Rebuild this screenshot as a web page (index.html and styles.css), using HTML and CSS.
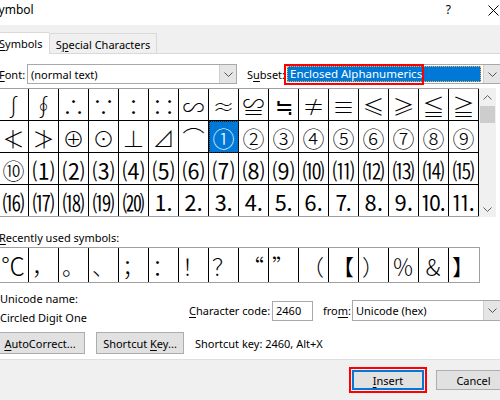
FILE: index.html
```html
<!DOCTYPE html>
<html>
<head>
<meta charset="utf-8">
<title>Symbol</title>
<link rel="stylesheet" href="styles.css">
</head>
<body>
<div class="dialog">
  <div class="titlebar">
    <span class="title">Symbol</span>
    <span class="help">?</span>
    <svg class="close" width="11" height="11" viewBox="0 0 11 11"><path d="M0.5 0.5L10.5 10.5M10.5 0.5L0.5 10.5" stroke="#000" stroke-width="1" fill="none"/></svg>
  </div>
  <div class="tabbar">
    <div class="tab active"><u>S</u>ymbols</div>
    <div class="tab">S<u>p</u>ecial Characters</div>
  </div>
  <div class="panel">
    <div class="font-row">
      <span class="lbl font-lbl"><u>F</u>ont:</span>
      <div class="combo font-combo">
        <span class="combo-text">(normal text)</span>
        <span class="drop"><svg width="9" height="5" viewBox="0 0 9 5"><path d="M0.5 0.5L4.5 4.5L8.5 0.5" stroke="#555" fill="none"/></svg></span>
      </div>
      <span class="lbl subset-lbl">S<u>u</u>bset:</span>
      <div class="combo subset-combo">
        <span class="sel-text">Enclosed Alphanumerics</span>
        <span class="drop"><svg width="9" height="5" viewBox="0 0 9 5"><path d="M0.5 0.5L4.5 4.5L8.5 0.5" stroke="#555" fill="none"/></svg></span>
        <span class="mark subset-mark"></span>
      </div>
    </div>

    <div class="grid-wrap">
      <div class="grid">
        <span class="cell">∫</span><span class="cell">∮</span><span class="cell">∴</span><span class="cell">∵</span><span class="cell">∶</span><span class="cell">∷</span><span class="cell">∽</span><span class="cell">≈</span><span class="cell">≌</span><span class="cell">≒</span><span class="cell">≠</span><span class="cell">≡</span><span class="cell">≤</span><span class="cell">≥</span><span class="cell">≦</span><span class="cell">≧</span>
        <span class="cell">≮</span><span class="cell">≯</span><span class="cell">⊕</span><span class="cell">⊙</span><span class="cell">⊥</span><span class="cell">⊿</span><span class="cell">⌒</span><span class="cell selected">①</span><span class="cell">②</span><span class="cell">③</span><span class="cell">④</span><span class="cell">⑤</span><span class="cell">⑥</span><span class="cell">⑦</span><span class="cell">⑧</span><span class="cell">⑨</span>
        <span class="cell">⑩</span><span class="cell reg">⑴</span><span class="cell reg">⑵</span><span class="cell reg">⑶</span><span class="cell reg">⑷</span><span class="cell reg">⑸</span><span class="cell reg">⑹</span><span class="cell reg">⑺</span><span class="cell reg">⑻</span><span class="cell reg">⑼</span><span class="cell reg">⑽</span><span class="cell reg">⑾</span><span class="cell reg">⑿</span><span class="cell reg">⒀</span><span class="cell reg">⒁</span><span class="cell reg">⒂</span>
        <span class="cell reg last">⒃</span><span class="cell reg last">⒄</span><span class="cell reg last">⒅</span><span class="cell reg last">⒆</span><span class="cell reg last">⒇</span><span class="cell reg last">⒈</span><span class="cell reg last">⒉</span><span class="cell reg last">⒊</span><span class="cell reg last">⒋</span><span class="cell reg last">⒌</span><span class="cell reg last">⒍</span><span class="cell reg last">⒎</span><span class="cell reg last">⒏</span><span class="cell reg last">⒐</span><span class="cell reg last">⒑</span><span class="cell reg last">⒒</span>
      </div>
      <div class="vscroll">
        <svg class="arrow" width="9" height="5" viewBox="0 0 9 5"><path d="M0.5 4.5L4.5 0.5L8.5 4.5" stroke="#606060" fill="none"/></svg>
        <div class="thumb"></div>
        <div class="track"></div>
        <svg class="arrow" width="9" height="5" viewBox="0 0 9 5"><path d="M0.5 0.5L4.5 4.5L8.5 0.5" stroke="#606060" fill="none"/></svg>
      </div>
    </div>

    <div class="recent-lbl"><u>R</u>ecently used symbols:</div>
    <div class="recent">
      <span class="rcell big">℃</span><span class="rcell">，</span><span class="rcell">。</span><span class="rcell">、</span><span class="rcell">；</span><span class="rcell">：</span><span class="rcell">！</span><span class="rcell">？</span><span class="rcell">“</span><span class="rcell">”</span><span class="rcell">（</span><span class="rcell">【</span><span class="rcell">）</span><span class="rcell">％</span><span class="rcell">＆</span><span class="rcell">】</span>
    </div>

    <div class="info">
      <div class="name-col">
        <div class="line">Unicode name:</div>
        <div class="line name">Circled Digit One</div>
      </div>
      <div class="code-row">
        <span class="code-lbl"><u>C</u>haracter code:</span>
        <span class="input">2460</span>
        <span class="from-lbl">fro<u>m</u>:</span>
        <div class="combo from-combo">
          <span class="combo-text">Unicode (hex)</span>
          <span class="drop"><svg width="9" height="5" viewBox="0 0 9 5"><path d="M0.5 0.5L4.5 4.5L8.5 0.5" stroke="#555" fill="none"/></svg></span>
        </div>
      </div>
    </div>

    <div class="btn-row">
      <button class="btn auto"><u>A</u>utoCorrect...</button>
      <button class="btn short">Shortcut <u>K</u>ey...</button>
      <span class="shortcut-text">Shortcut key: 2460, Alt+X</span>
    </div>
  </div>
  <div class="footer">
    <button class="btn insert"><u>I</u>nsert<span class="mark insert-mark"></span></button>
    <button class="btn cancel">Cancel</button>
  </div>
</div>
</body>
</html>
```

FILE: styles.css
```css
* { box-sizing: border-box; }

body {
  margin: 0;
  width: 500px;
  height: 400px;
  overflow: hidden;
  background: #ffffff;
  font-family: "Noto Sans", "Open Sans", sans-serif;
  font-size: 11px;
  color: #000;
}

u { text-decoration: underline; text-underline-offset: 2px; }

.dialog { width: 500px; height: 400px; }

/* title bar */
.titlebar {
  height: 25px;
  display: flex;
  align-items: flex-start;
  padding-top: 2px;
  line-height: 16px;
}
.title { margin-left: -8px; font-size: 12px; }
.help { margin-left: auto; margin-right: 37px; font-size: 12px; }
.close { margin-top: 3px; margin-right: 1px; }

/* tabs */
.tabbar {
  height: 29px;
  background: #f0f0f0;
  display: flex;
  align-items: flex-end;
  border-bottom: 1px solid #d9d9d9;
}
.tab {
  height: 20px;
  border: 1px solid #d9d9d9;
  border-bottom: none;
  display: flex;
  align-items: center;
  justify-content: center;
  width: 108px;
  white-space: nowrap;
  padding-top: 1px;
}
.tab.active {
  background: #fff;
  height: 22px;
  width: 52px;
  margin-left: -3px;
  margin-bottom: -1px;
  justify-content: flex-start;
  padding-left: 1px;
  padding-top: 0;
  border-right: none;
}

/* panel */
.panel {
  height: 306px;
  background: #fff;
  border-bottom: 1px solid #dfdfdf;
  padding-top: 10px;
}

.font-row {
  display: flex;
  align-items: center;
  height: 20px;
}
.lbl { display: inline-block; white-space: nowrap; }
.font-lbl { margin-left: -1px; width: 28px; }
.subset-lbl { margin-left: 10px; width: 37px; }

.combo {
  position: relative;
  height: 20px;
  border: 1px solid #a9a9a9;
  background: #fff;
  display: flex;
  align-items: center;
}
.combo-text { padding-left: 3px; flex: 1; white-space: nowrap; overflow: hidden; }
.drop {
  width: 17px;
  height: 18px;
  background: #e5e5e5;
  border-left: 1px solid #cfcfcf;
  display: flex;
  align-items: center;
  justify-content: center;
}
.font-combo { width: 210px; }
.subset-combo { flex: 1; margin-right: -1px; padding-left: 2px; }
.sel-text {
  flex: 1;
  height: 16px;
  line-height: 14px;
  background: #0078d7;
  color: #fff;
  border: 1px dotted #ffb347;
  padding-left: 2px;
  margin-right: 2px;
  white-space: nowrap;
  font-size: 11.5px;
}

.mark {
  position: absolute;
  border: 2px solid #ff0000;
  pointer-events: none;
}
.subset-mark { left: -1px; top: -1px; width: 140px; height: 21px; }

/* symbol grid */
.grid-wrap {
  display: flex;
  margin-top: 4px;
  margin-left: -2px;
}
.grid {
  display: grid;
  grid-template-columns: repeat(16, 30px);
  border-top: 1px solid #a0a0a0;
  border-bottom: 1px solid #a0a0a0;
  border-left: 1px solid #000;
  width: 481px;
}
.cell {
  height: 32px;
  border-right: 1px solid #000;
  border-bottom: 1px solid #000;
  display: flex;
  align-items: center;
  justify-content: center;
  font-family: "Noto Sans CJK SC", "DejaVu Sans", sans-serif;
  font-weight: 300;
  font-size: 22px;
  line-height: 1;
}
.cell.reg { font-weight: 400; }
.cell.last { height: 31px; border-bottom: none; }
.cell.selected {
  background: #0078d7;
  color: #fff;
  outline: 1px dotted #222;
  outline-offset: -1px;
}

.vscroll {
  width: 17px;
  height: 129px;
  background: #f0f0f0;
  display: flex;
  flex-direction: column;
  align-items: center;
  padding: 7px 0 5px;
}
.thumb {
  width: 15px;
  height: 17px;
  background: #cdcdcd;
  margin-top: 6px;
}
.track { flex: 1; }

/* recently used */
.recent-lbl {
  margin-top: 13px;
  line-height: 16px;
  height: 16px;
  margin-left: -1px;
}
.recent {
  margin-top: 1px;
  margin-left: -2px;
  width: 482px;
  display: grid;
  grid-template-columns: repeat(15, 30px) 30px;
  border: 1px solid #a0a0a0;
  height: 36px;
}
.rcell {
  height: 34px;
  border-right: 1px solid #000;
  display: flex;
  align-items: center;
  justify-content: flex-start;
  padding-left: 3px;
  font-family: "Noto Sans CJK SC", sans-serif;
  font-weight: 300;
  font-size: 22px;
  line-height: 1;
}
.rcell:last-child { border-right: none; }
.rcell.big { font-size: 24px; padding-left: 2px; }

/* info */
.info {
  display: flex;
  margin-top: 8px;
  height: 35px;
}
.name-col { width: 189px; }
.line { line-height: 16px; height: 16px; white-space: nowrap; }
.line.name { margin-top: 3px; }
.code-row {
  display: flex;
  align-items: center;
  height: 21px;
  margin-top: 9px;
  flex: 1;
}
.code-lbl { width: 83px; white-space: nowrap; }
.input {
  width: 41px;
  height: 20px;
  border: 1px solid #a9a9a9;
  padding-left: 3px;
  line-height: 18px;
}
.from-lbl { margin-left: 10px; width: 29px; white-space: nowrap; }
.from-combo { flex: 1; margin-right: -1px; height: 21px; }
.from-combo .drop { height: 19px; }

/* buttons */
.btn-row {
  display: flex;
  align-items: center;
  margin-top: 6px;
  height: 22px;
}
.btn {
  height: 22px;
  background: #e1e1e1;
  border: 1px solid #adadad;
  font-family: inherit;
  font-size: 11px;
  color: #000;
  padding: 0;
  position: relative;
  white-space: nowrap;
}
.auto { margin-left: -5px; width: 90px; }
.short { margin-left: 11px; width: 88px; }
.shortcut-text { margin-left: 11px; white-space: nowrap; }

.footer {
  height: 40px;
  background: #f0f0f0;
  display: flex;
  justify-content: flex-end;
  align-items: flex-start;
  padding-top: 10px;
}
.insert {
  width: 72px;
  height: 20px;
  border: 2px solid #0078d7;
}
.insert-mark { left: -5px; top: -5px; width: 78px; height: 26px; }
.cancel {
  width: 75px;
  height: 20px;
  margin-left: 12px;
  margin-right: -11px;
}
```
